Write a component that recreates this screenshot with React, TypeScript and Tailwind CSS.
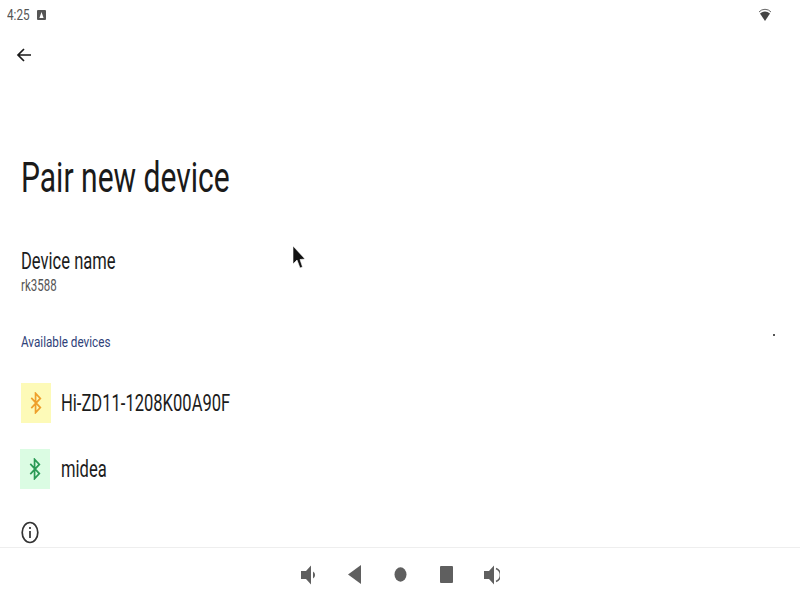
import React from "react";

const sq = "inline-block origin-left scale-x-[0.72] whitespace-nowrap";

function Bt({ color }: { color: string }) {
  return (
    <svg width="12" height="22" viewBox="0 0 14 24" preserveAspectRatio="none" fill="none" stroke={color} strokeWidth="2">
      <path d="M1.5 6.5 L12 17 L6.5 22.5 V1.5 L12 7 L1.5 17.5" />
    </svg>
  );
}

function Device({ name, bg, color, box }: { name: string; bg: string; color: string; box: string }) {
  return (
    <div className="flex items-center">
      <div className={`flex items-center justify-center w-[30px] h-[40px] -translate-y-px ${box} ${bg}`}>
        <Bt color={color} />
      </div>
      <span className={`ml-[10px] text-[23px] leading-[28px] text-[#1c1c1c] ${sq}`}>{name}</span>
    </div>
  );
}

function Slot({ children }: { children: React.ReactNode }) {
  return <div className="flex items-center justify-center w-[46px]">{children}</div>;
}

export default function App() {
  return (
    <div className="relative flex flex-col h-[600px] w-[800px] overflow-hidden bg-white font-['Roboto',sans-serif]">
      <div className="flex items-center justify-between h-[30px] pl-[7px] pr-[27px] shrink-0">
        <div className="flex items-center w-[40px]">
          <span className="text-[14px] leading-[30px] text-[#555] w-[30px] inline-block origin-left scale-x-[0.84] whitespace-nowrap">4:25</span>
          <svg width="9" height="10" viewBox="0 0 9 10">
            <rect width="9" height="10" rx="1" fill="#555" />
            <path d="M4.5 2 L6.6 8 H2.4 Z" fill="#fff" />
          </svg>
        </div>
        <svg width="16" height="14" viewBox="0 0 16 14">
          <path d="M2 4 A8 8 0 0 1 14 4" fill="none" stroke="#666" strokeWidth="1" />
          <path d="M3 5.5 Q8 1.5 13 5.5 L8 13 Z" fill="#444" />
        </svg>
      </div>

      <div className="pl-[16px] pt-[17px] h-[40px] shrink-0">
        <svg width="16" height="16" viewBox="0 0 16 16" fill="none" stroke="#1a1a1a" strokeWidth="1.7">
          <path d="M15 8 H2 M8 2 L2 8 L8 14" />
        </svg>
      </div>

      <div className="flex-1 min-h-0 pl-[21px] flex flex-col">
        <h1 className="mt-[83px] text-[42px] leading-[50px] font-normal text-[#1a1a1a] inline-block origin-left scale-x-[0.715] whitespace-nowrap">Pair new device</h1>
        <div className={`mt-[45px] text-[23px] leading-[28px] text-[#1c1c1c] ${sq}`}>Device name</div>
        <div className={`mt-0 text-[16px] leading-[20px] text-[#555] ${sq}`}>rk3588</div>
        <div className="mt-[36px] text-[15px] leading-[20px] text-[#2f4279] inline-block origin-left scale-x-[0.78] whitespace-nowrap">Available devices</div>
        <div className="mt-[32px] flex flex-col gap-[26px]">
          <Device name="Hi-ZD11-1208K00A90F" bg="bg-[#fdfab8]" color="#ee9f2b" box="" />
          <Device name="midea" bg="bg-[#dbfce3]" color="#2a9a55" box="-ml-px mr-px" />
        </div>
        <svg className="mt-[31px]" width="18" height="23" viewBox="0 0 18 23" fill="none" stroke="#333" strokeWidth="1.7">
          <ellipse cx="9" cy="11.5" rx="7.8" ry="10" />
          <path d="M9 10 V17 M9 6 V8" />
        </svg>
      </div>

      <div className="flex items-center justify-center h-[53px] shrink-0 border-t border-[#eeeeee] pt-[1px]">
        <Slot>
          <svg className="ml-[1px]" width="16" height="20" viewBox="0 0 16 20" fill="#5f5f5f">
            <path d="M0 6 H5 L10 0.5 V19.5 L5 14 H0 Z" />
            <path d="M12 6.5 A4 4 0 0 1 12 13.5 Z" />
          </svg>
        </Slot>
        <Slot>
          <svg width="13" height="19" viewBox="0 0 13 19" fill="#5f5f5f">
            <path d="M13 0 V19 L0 9.5 Z" />
          </svg>
        </Slot>
        <Slot>
          <svg width="13" height="15" viewBox="0 0 13 15" fill="#5f5f5f">
            <ellipse cx="6.5" cy="7.5" rx="6" ry="7.2" />
          </svg>
        </Slot>
        <Slot>
          <svg width="13" height="17" viewBox="0 0 13 17" fill="#5f5f5f">
            <rect width="13" height="17" rx="1" />
          </svg>
        </Slot>
        <Slot>
          <svg width="16" height="20" viewBox="0 0 16 20" fill="#5f5f5f">
            <path d="M0 6 H5 L10 0.5 V19.5 L5 14 H0 Z" />
            <path d="M12 3.5 A7 7 0 0 1 12 16.5" fill="none" stroke="#5f5f5f" strokeWidth="1.5" />
          </svg>
        </Slot>
      </div>

      <svg className="absolute left-[292px] top-[245px]" width="14" height="26" viewBox="0 0 14 26">
        <path d="M1 1 V19 L5 15 L8 23 L10.5 22 L8 14.5 L13 14 Z" fill="#111" stroke="#fff" strokeWidth="0.6" />
      </svg>
      <div className="absolute left-[773px] top-[334px] w-[2px] h-[2px] bg-[#555]" />
    </div>
  );
}
